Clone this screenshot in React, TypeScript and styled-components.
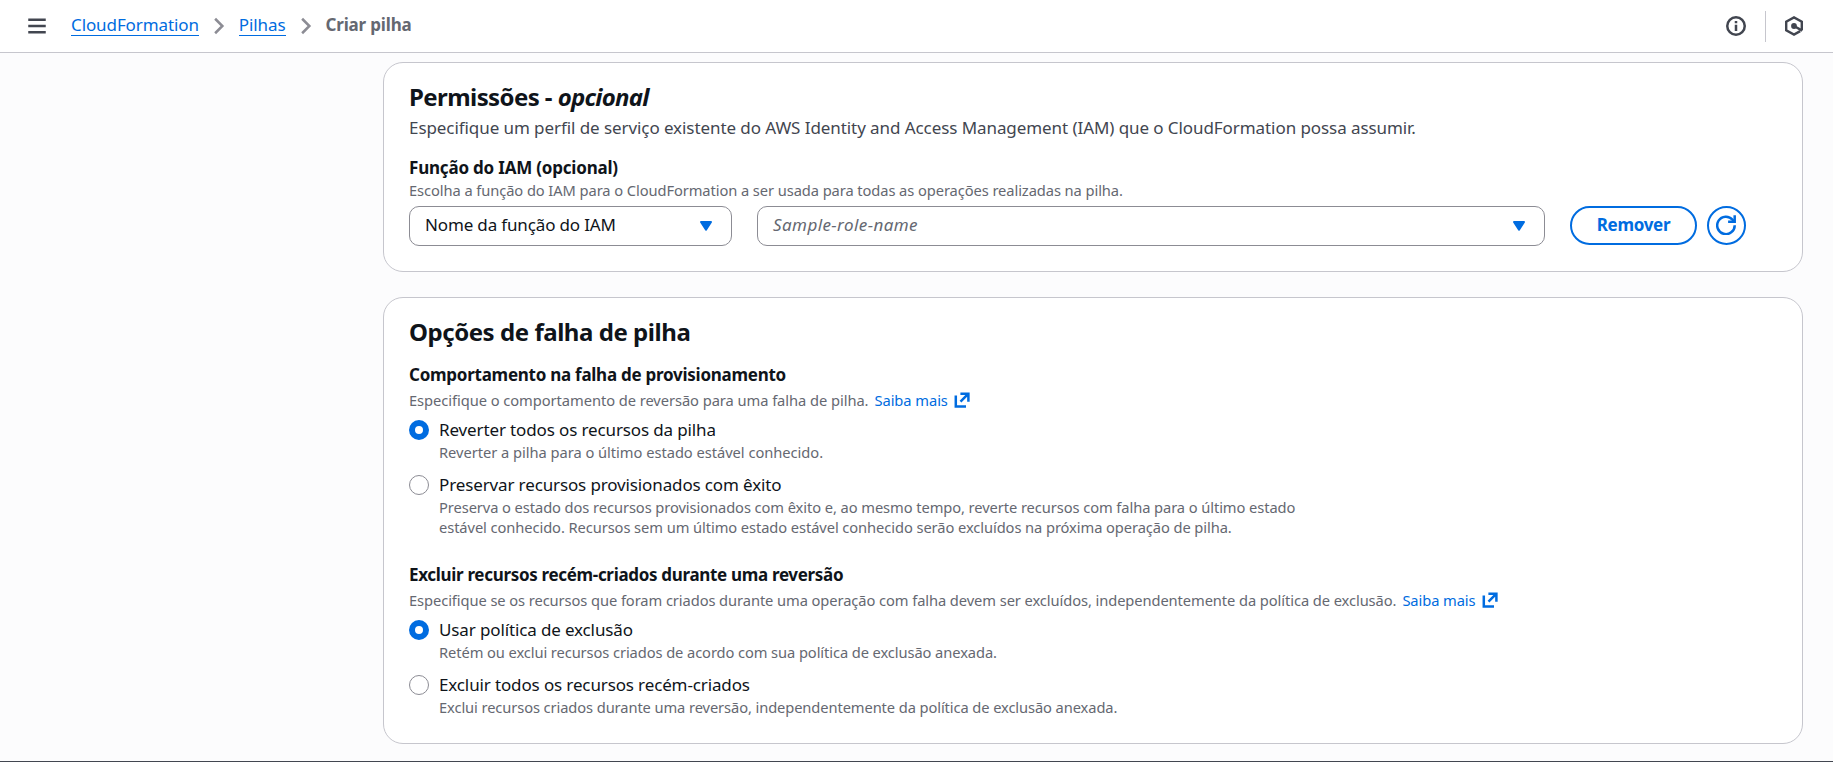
import React from 'react';
import styled, { createGlobalStyle } from 'styled-components';

const color = {
  link: '#006ce0',
  heading: '#0f141a',
  body: '#424650',
  muted: '#656871',
  control: '#8c8c94',
  divider: '#c6c6cd',
};

const GlobalStyle = createGlobalStyle`
  *, *::before, *::after { box-sizing: border-box; }
  body {
    margin: 0;
    background: #fcfcfd;
    color: ${color.heading};
    font-family: "Noto Sans", "Open Sans", sans-serif;
    font-size: 17px;
    line-height: 25px;
    letter-spacing: -0.13px;
  }
  p, h2, h3 { margin: 0; }
  svg { display: block; flex: none; }
`;

const Page = styled.div`
  display: flex;
  flex-direction: column;
  height: 762px;
  overflow: hidden;
  border-bottom: 1px solid ${color.body};
`;

const TopBar = styled.header`
  display: flex;
  align-items: center;
  flex: none;
  height: 53px;
  padding: 0 29px 0 27px;
  background: #fff;
  border-bottom: 1px solid ${color.divider};
  color: ${color.body};
`;

const Breadcrumbs = styled.nav`
  display: flex;
  align-items: center;
  margin-left: 24px;
`;

const Crumb = styled.a`
  margin-bottom: 1px;
  line-height: 20px;
  color: ${color.link};
  border-bottom: 1px solid ${color.link};
  letter-spacing: -0.1px;
`;

const CurrentCrumb = styled.span`
  margin-bottom: 1px;
  padding-bottom: 1px;
  line-height: 20px;
  font-weight: 700;
  color: ${color.muted};
  letter-spacing: -0.17px;
`;

const Separator = styled.span`
  color: ${color.control};
  margin: 0 10px;
`;

const Tools = styled.div`
  display: flex;
  align-items: center;
  margin-left: auto;
`;

const ToolDivider = styled.span`
  width: 1px;
  height: 31px;
  margin: 0 18px 0 19px;
  background: ${color.divider};
`;

const Content = styled.main`
  display: flex;
  flex-direction: column;
  gap: 25px;
  width: 1420px;
  margin: 9px 0 0 383px;
`;

const Card = styled.section`
  padding: 19px 25px 26px;
  border: 1px solid ${color.divider};
  border-radius: 20px;
  background: #fff;

  &:first-child { padding-bottom: 25px; }
`;

const Title = styled.h2<{ $track?: number }>`
  font-size: 24px;
  line-height: 30px;
  font-weight: 700;
  letter-spacing: ${(p) => p.$track ?? -0.45}px;
`;

const Optional = styled.em`
  letter-spacing: -0.75px;
`;

const Lead = styled.p`
  margin-top: 3px;
  color: ${color.body};
  letter-spacing: -0.075px;
`;

const Label = styled.h3<{ $track?: number }>`
  font-size: 17px;
  line-height: 25px;
  font-weight: 700;
  letter-spacing: ${(p) => p.$track ?? -0.26}px;
`;

const Hint = styled.p<{ $track?: number }>`
  display: flex;
  align-items: center;
  font-size: 14.7px;
  line-height: 20px;
  color: ${color.muted};
  letter-spacing: ${(p) => p.$track ?? -0.085}px;
  white-space: nowrap;
`;

const HintLink = styled.a`
  display: flex;
  align-items: center;
  gap: 6px;
  margin-left: 6px;
  color: ${color.link};
`;

const RoleField = styled.div`
  margin-top: 15px;
`;

const RoleControls = styled.div`
  display: flex;
  margin-top: 6px;
`;

const Select = styled.div<{ $width: number; $placeholder?: boolean }>`
  display: flex;
  align-items: center;
  justify-content: space-between;
  width: ${(p) => p.$width}px;
  height: 40px;
  margin-right: 25px;
  padding: 0 18px 2px 15px;
  border: 1px solid ${color.control};
  border-radius: 10px;
  line-height: 22px;
  color: ${(p) => (p.$placeholder ? color.muted : color.heading)};
  font-style: ${(p) => (p.$placeholder ? 'italic' : 'normal')};
  letter-spacing: ${(p) => (p.$placeholder ? 0.42 : -0.15)}px;

  svg { margin-top: 2px; }
`;

const Button = styled.button<{ $round?: boolean }>`
  display: flex;
  align-items: center;
  justify-content: center;
  width: ${(p) => (p.$round ? 39 : 127)}px;
  height: 39px;
  margin-right: 10px;
  padding: ${(p) => (p.$round ? '0 1px 1px 0' : '0 0 2px')};
  border: 2px solid ${color.link};
  border-radius: 20px;
  background: #fff;
  color: ${color.link};
  font: 700 17px/25px "Noto Sans", sans-serif;
  letter-spacing: -0.3px;
`;

const OptionGroup = styled.div<{ $first?: boolean }>`
  margin-top: ${(p) => (p.$first ? 15 : 25)}px;

  > ${Hint} { margin-top: 3px; }
`;

const Options = styled.div`
  display: flex;
  flex-direction: column;
  gap: 10px;
  margin-top: 7px;
`;

const OptionRow = styled.div`
  display: flex;
  gap: 10px;
`;

const Radio = styled.span<{ $checked?: boolean }>`
  flex: none;
  width: 20px;
  height: 20px;
  margin-top: 3px;
  border: ${(p) => (p.$checked ? `6px solid ${color.link}` : `1.5px solid ${color.control}`)};
  border-radius: 50%;
  background: #fff;
`;

const MenuIcon = () => (
  <svg width="20" height="20" viewBox="0 0 16 16" fill="none" stroke="currentColor" strokeWidth="2">
    <path d="M1 3h14M1 8h14M1 13h14" />
  </svg>
);

const ChevronIcon = () => (
  <svg width="20" height="20" viewBox="0 0 16 16" fill="none" stroke="currentColor" strokeWidth="2">
    <path d="M4.9 2.2 10.7 8l-5.8 5.8" />
  </svg>
);

const InfoIcon = () => (
  <svg width="20" height="20" viewBox="0 0 16 16" fill="none" stroke="currentColor" strokeWidth="2">
    <circle cx="8" cy="8" r="7" />
    <path d="M8 4v1.8M8 7v5" />
  </svg>
);

const HexIcon = () => (
  <svg width="20" height="20" viewBox="0 0 20 20" fill="none" stroke="currentColor" strokeWidth="2.4">
    <path d="M17.8 14.2V5.7L10 1.4 2.2 5.7v8.6L10 18.6l6.2-3.5" />
    <circle cx="10" cy="10" r="2.9" fill="currentColor" stroke="none" />
    <path d="m10 10 8.2 4.6" />
  </svg>
);

const CaretIcon = () => (
  <svg width="14" height="12" viewBox="0 0 14 12" fill={color.link} stroke={color.link} strokeWidth="2" strokeLinejoin="round">
    <path d="M2 2h10L7 9.6z" />
  </svg>
);

const ExternalIcon = () => (
  <svg width="16" height="16" viewBox="0 0 16 16" fill="none" stroke="currentColor" strokeWidth="2.5">
    <path d="M1.8 3.6v10.9H12M6.4 1.7h8v8.1M14.2 1.9 6.5 9.6" />
  </svg>
);

const RefreshIcon = () => (
  <svg width="20" height="20" viewBox="0 0 20 20" fill="none" stroke="currentColor" strokeWidth="2.5">
    <path d="M18.7 10.3A8.75 8.75 0 1 1 16.6 4.7l1.6 2" />
    <path d="M18.7.2v6.6h-6.6" />
  </svg>
);

interface Choice {
  label: string;
  description: React.ReactNode;
  track?: number;
}

interface ChoiceGroupProps {
  title: string;
  hint: string;
  choices: Choice[];
  first?: boolean;
  track?: number;
  hintTrack?: number;
}

const ChoiceGroup = ({ title, hint, choices, first, track, hintTrack }: ChoiceGroupProps) => (
  <OptionGroup $first={first}>
    <Label $track={track}>{title}</Label>
    <Hint $track={hintTrack}>
      {hint}
      <HintLink>
        Saiba mais
        <ExternalIcon />
      </HintLink>
    </Hint>
    <Options>
      {choices.map((choice, i) => (
        <OptionRow key={choice.label}>
          <Radio $checked={i === 0} />
          <div>
            <p>{choice.label}</p>
            <Hint $track={choice.track}>{choice.description}</Hint>
          </div>
        </OptionRow>
      ))}
    </Options>
  </OptionGroup>
);

const failureChoices: Choice[] = [
  {
    label: 'Reverter todos os recursos da pilha',
    description: 'Reverter a pilha para o último estado estável conhecido.',
    track: -0.04,
  },
  {
    label: 'Preservar recursos provisionados com êxito',
    description: (
      <span>
        Preserva o estado dos recursos provisionados com êxito e, ao mesmo tempo, reverte recursos com falha para o último estado
        <br />
        estável conhecido. Recursos sem um último estado estável conhecido serão excluídos na próxima operação de pilha.
      </span>
    ),
  },
];

const deletionChoices: Choice[] = [
  {
    label: 'Usar política de exclusão',
    description: 'Retém ou exclui recursos criados de acordo com sua política de exclusão anexada.',
    track: -0.095,
  },
  {
    label: 'Excluir todos os recursos recém-criados',
    description: 'Exclui recursos criados durante uma reversão, independentemente da política de exclusão anexada.',
    track: -0.1,
  },
];

export default function App() {
  return (
    <Page>
      <GlobalStyle />
      <TopBar>
        <MenuIcon />
        <Breadcrumbs>
          <Crumb>CloudFormation</Crumb>
          <Separator><ChevronIcon /></Separator>
          <Crumb>Pilhas</Crumb>
          <Separator><ChevronIcon /></Separator>
          <CurrentCrumb>Criar pilha</CurrentCrumb>
        </Breadcrumbs>
        <Tools>
          <InfoIcon />
          <ToolDivider />
          <HexIcon />
        </Tools>
      </TopBar>
      <Content>
        <Card>
          <Title $track={-0.58}>
            Permissões - <Optional>opcional</Optional>
          </Title>
          <Lead>
            Especifique um perfil de serviço existente do AWS Identity and Access Management (IAM) que o CloudFormation possa assumir.
          </Lead>
          <RoleField>
            <Label $track={-0.2}>Função do IAM (opcional)</Label>
            <Hint>Escolha a função do IAM para o CloudFormation a ser usada para todas as operações realizadas na pilha.</Hint>
            <RoleControls>
              <Select $width={323}>
                Nome da função do IAM
                <CaretIcon />
              </Select>
              <Select $width={788} $placeholder>
                Sample-role-name
                <CaretIcon />
              </Select>
              <Button>Remover</Button>
              <Button $round aria-label="Atualizar">
                <RefreshIcon />
              </Button>
            </RoleControls>
          </RoleField>
        </Card>
        <Card>
          <Title>Opções de falha de pilha</Title>
          <ChoiceGroup
            first
            hintTrack={-0.06}
            title="Comportamento na falha de provisionamento"
            hint="Especifique o comportamento de reversão para uma falha de pilha."
            choices={failureChoices}
          />
          <ChoiceGroup
            track={-0.32}
            title="Excluir recursos recém-criados durante uma reversão"
            hint="Especifique se os recursos que foram criados durante uma operação com falha devem ser excluídos, independentemente da política de exclusão."
            choices={deletionChoices}
          />
        </Card>
      </Content>
    </Page>
  );
}
